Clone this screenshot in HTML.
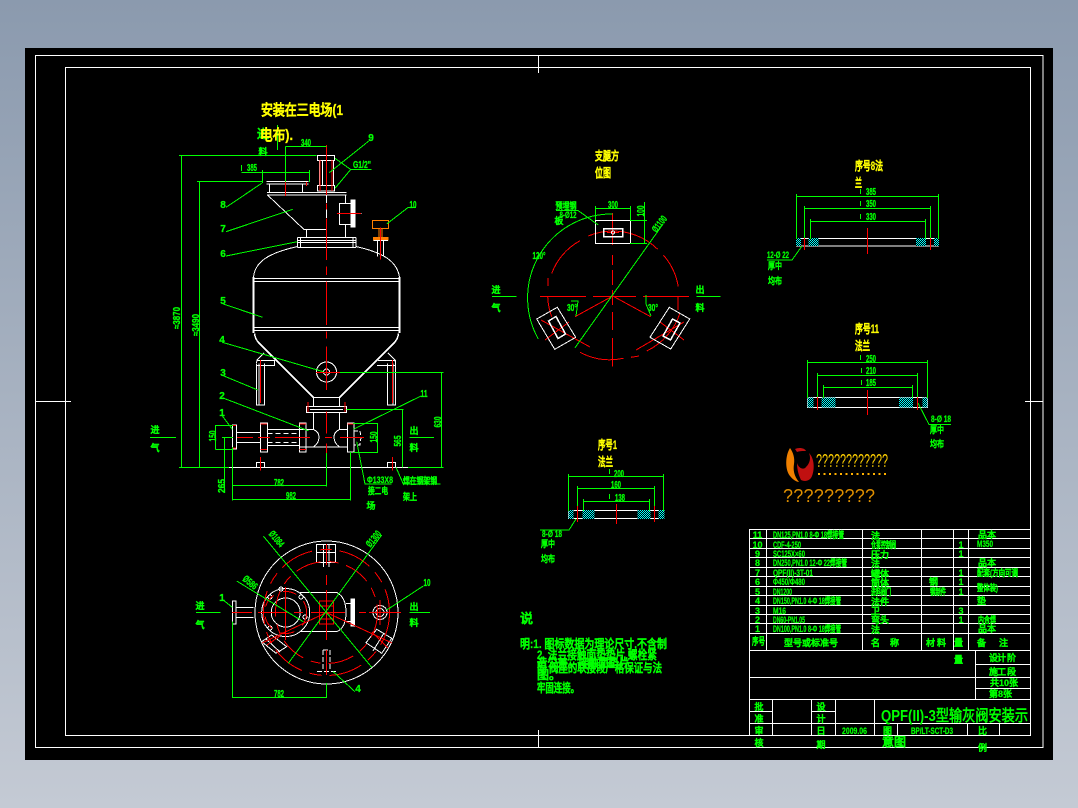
<!DOCTYPE html>
<html><head><meta charset="utf-8"><title>QPF(II)-3</title>
<style>
html,body{margin:0;padding:0;width:1078px;height:808px;overflow:hidden;background:linear-gradient(#8b9aae,#c4cad4)}
svg{position:absolute;left:0;top:0}
text{font-family:"Liberation Sans","WenQuanYi Zen Hei",sans-serif;font-weight:bold}
.g{fill:#0f0;stroke:#0f0;stroke-width:.25;font-size:9px}
.m{fill:#0f0;stroke:#0f0;stroke-width:.25;font-size:9px;text-anchor:middle}
.d{fill:#0f0;stroke:#0f0;stroke-width:.3;font-size:10px;text-anchor:middle}
.y{fill:#ff0;stroke:#ff0;stroke-width:.25;font-size:12px}
.W{fill:none;stroke:#fff;stroke-width:1}
.G{fill:none;stroke:#0f0;stroke-width:1}
.R{fill:none;stroke:#f00;stroke-width:1}
path,circle,rect{shape-rendering:crispEdges}
</style></head><body>
<svg width="1078" height="808" viewBox="0 0 1078 808" xmlns="http://www.w3.org/2000/svg">
<defs>
<pattern id="h" width="2" height="2" patternUnits="userSpaceOnUse"><rect width="2" height="2" fill="#000"/><rect width="1" height="1" fill="#0ff"/><rect x="1" y="1" width="1" height="1" fill="#0ff"/></pattern>
</defs>
<rect x="25" y="48" width="1028" height="712" fill="#000"/>
<!-- frames -->
<g class="W">
<rect x="35.5" y="55.5" width="1007.5" height="692"/>
<rect x="65.5" y="67.5" width="965" height="668"/>
<path d="M538.5 55V73M538.5 730V747M35 401.5H71M1025 401.5H1043"/>
</g>

<!-- SIDE VIEW white -->
<g class="W">
<path d="M317.5 155.5H334.5V160.5H317.5ZM319.5 160.5V185.5M333.5 160.5V185.5M322.5 160.5V185.5M317.5 185.5H334.5V191H317.5Z"/>
<path d="M267 192.5H346.5M267 195H346.5"/>
<path d="M266.5 181.5H308.5M266.5 184H308.5M269.5 184V192M302.5 184V192"/>
<path d="M267.5 195L304 229.5H326"/>
<path d="M306.5 229.5V237.5M345.5 195V203.5M345.5 224.5V237.5"/>
<rect x="339.5" y="203.5" width="12" height="21"/>
<rect x="351" y="200" width="4" height="27" fill="#fff"/>
<path d="M355 213.5H361.5"/>
<path d="M297.5 237.5H356M297.5 240.5H356M297.5 242.5H356M297.5 247.5H356M297.5 237.5V247.5M300.5 237.5V247.5M353 237.5V247.5M356 237.5V247.5"/>
<path d="M253.5 277C255 262 268 253 297.5 246.5M399.5 277C397 262 385 253 356 246.5"/>
<path d="M253.5 277V333M399.5 277V333" style="stroke-width:2"/>
<path d="M254 278.5H399M254 281.5H399M254 327.5H399M254 330.5H399"/>
<path d="M254.5 333.5Q255 338 258 342L313.5 397.5M398.5 333.5Q398 338 395 342L339.5 397.5" style="stroke-width:1.5"/>
<rect x="313.5" y="397.5" width="26" height="9"/>
<rect x="306.5" y="406.5" width="40" height="6"/>
<path d="M310 409.5H343"/>
<path d="M313.5 412.5V429.5M339.5 412.5V429.5"/>
<path d="M299 429.5H313.5Q319 432 319 437Q319 443 313.5 447H299M313.5 447H339.5M347 429.5H339.5Q334 432 334 437Q334 443 339.5 447H347"/>
<circle cx="326.5" cy="372" r="10"/><circle cx="326.5" cy="372" r="3"/>
<path d="M256.5 363.5V405H264.5V363.5M259 363.5V405M387.5 363.5V405H395.5V363.5M393 363.5V405"/>
<path d="M256.5 363L257 360L264 353M395.5 363L395 360L388 353"/>
<path d="M256.5 360.5H274.5V365.5H256.5M378 360.5H395.5V365.5H377"/>
<rect x="232.5" y="425" width="4" height="24"/>
<rect x="260.5" y="423" width="7" height="29"/>
<rect x="299.5" y="423" width="6.5" height="29"/>
<rect x="347.5" y="423" width="6.5" height="29"/>
<path d="M236 432.5H260M236 442.5H260M267.5 429.5H299.5M267.5 445.5H299.5"/>
<path d="M267.5 433.5H299.5M267.5 442.5H299.5" stroke-dasharray="5 3"/>
<path d="M354 431H360L361 437L360 445H354" stroke-dasharray="4 2"/>
<path d="M229 467.5H408.5"/>
<path d="M256.5 467V462.5H264.5V467M387.5 467V462.5H395.5V467"/>
<path d="M326.5 195V203M326.5 209.5V218"/>
</g>
<!-- valve orange -->
<g fill="none" stroke="#ff7f00">
<rect x="372.5" y="220.5" width="16" height="8"/><rect x="379" y="228.5" width="3" height="9"/><rect x="373.5" y="237.5" width="14.5" height="2.5" fill="#ff7f00"/>
</g>
<path class="W" d="M373.5 240.5H388M377.5 241V256.5M383.5 241V256.5"/>
<!-- side view red -->
<g class="R">
<path d="M326.5 145V195M326.5 203.3V209.3M326.5 218.3V260M326.5 266.7V275M326.5 281.7V325M326.5 331.7V338.3M326.5 346.7V390M326.5 411.7V433.3M326.5 443.3V453.3"/>
<path d="M320 160V191M332 160V191M285.5 182V196M306.5 182V186"/>
<path d="M337 213.5H361"/><path d="M380.5 227.5V259.3"/>
<path d="M316 372.5H342"/>
<path d="M260.5 360V403M392.5 360V403"/>
<path d="M237 437.5H253M258 437.5H270M275 437.5H310M325 437.5H332M340 437.5H364"/>
<path d="M260.5 457V470.7M392.5 457V470.7"/>
<path d="M308 402V412M345 402V412"/>
<path d="M233 425.5H236M233 448H236M260.5 424H267M260.5 449.5H267M299.5 424H306M299.5 449.5H306M347.5 424H354"/>
</g>
<!-- side view green -->
<g class="G">
<path d="M181.5 155.5V467.5M199.5 181.5V467.5M179 155.5H316.5M197 181.5H263M179 467.5H229M408 467.5H443.5"/>
<path d="M285.5 146.5H326.5M285.5 146.5V182M241.5 172.5H310M262.5 170V183M309.5 170V182M241.5 165V171"/>
<path d="M277.5 125V150"/>
<path d="M226 207.3L261.7 183.3M226 231.7L292.7 209.3M226 256L297.3 241.7M223.3 304L262.7 317.3M370 140L329.3 172.7M350.7 169.5H371.7M350.7 169.5L335 158.3M350.7 169.5L335 188.3M408.3 207.3L386.7 224M408 207.5H416"/>
<path d="M222.3 342.3L323.3 371.7M223.3 375.7L257.7 390M222.3 397.7L308.3 430.7M221.7 415L232.3 429.3M421 396L353.3 429.3"/>
<path d="M441.5 372.5V467.5M340 372.5H443.5M402.5 409.5V467.5M346.7 409.5H403.5M377.5 423.5V452.5M353 423.5H378M353 452.5H378M215.5 425V449.5M215.5 425.5H233M215.5 449.5H233M224.5 437.5V493M222 437.5H233"/>
<path d="M232.5 447V500.5M326.5 453V486.5M350.5 452V500.5M232.5 485.5H326.5M232.5 499.5H350.5"/>
<path d="M356.7 441.7L365 484H391.7M396 467.3L403.3 484H440.7"/>
<path d="M150 437.5H176M409.5 437.5H434"/>
</g>
<g>
<text class="m" x="263" y="138" style="font-size:12px">进</text>
<text class="y" x="261" y="115" style="font-size:15px" textLength="82" lengthAdjust="spacingAndGlyphs">安装在三电场(1</text>
<text class="y" x="260" y="140" style="font-size:15px" textLength="33" lengthAdjust="spacingAndGlyphs">电布).</text>
<text class="m" x="263" y="155">料</text>
<text class="d" x="223" y="208">8</text><text class="d" x="223" y="232">7</text><text class="d" x="223" y="257">6</text><text class="d" x="223" y="304">5</text>
<text class="d" x="222" y="343">4</text><text class="d" x="223" y="376">3</text><text class="d" x="222" y="399">2</text><text class="d" x="222" y="416">1</text>
<text class="d" x="371" y="141">9</text><text class="d" x="413" y="208" textLength="7" lengthAdjust="spacingAndGlyphs">10</text><text class="d" x="424" y="397" textLength="7" lengthAdjust="spacingAndGlyphs">11</text>
<text class="d" x="306" y="146" textLength="10" lengthAdjust="spacingAndGlyphs">340</text><text class="d" x="252" y="171" textLength="10" lengthAdjust="spacingAndGlyphs">385</text><text class="d" x="362" y="168" textLength="18" lengthAdjust="spacingAndGlyphs">G1/2"</text>
<text class="d" transform="translate(180,318) rotate(-90)" textLength="22" lengthAdjust="spacingAndGlyphs">≈3870</text>
<text class="d" transform="translate(199,325) rotate(-90)" textLength="22" lengthAdjust="spacingAndGlyphs">≈3490</text>
<text class="d" transform="translate(441,422) rotate(-90)" textLength="11" lengthAdjust="spacingAndGlyphs">630</text>
<text class="d" transform="translate(401,441) rotate(-90)" textLength="11" lengthAdjust="spacingAndGlyphs">565</text>
<text class="d" transform="translate(377,437) rotate(-90)" textLength="11" lengthAdjust="spacingAndGlyphs">150</text>
<text class="d" transform="translate(216,436) rotate(-90)" textLength="11" lengthAdjust="spacingAndGlyphs">150</text>
<text class="d" transform="translate(225,486) rotate(-90)" textLength="14" lengthAdjust="spacingAndGlyphs">265</text>
<text class="d" x="279" y="486" textLength="10" lengthAdjust="spacingAndGlyphs">782</text><text class="d" x="291" y="499" textLength="10" lengthAdjust="spacingAndGlyphs">982</text>
<text class="g" x="367" y="483" textLength="26" lengthAdjust="spacingAndGlyphs">Φ133X8</text>
<text class="m" x="378" y="494" textLength="20" lengthAdjust="spacingAndGlyphs">接二电</text><text class="m" x="371" y="509">场</text>
<text class="m" x="420" y="484" textLength="34" lengthAdjust="spacingAndGlyphs">焊在钢架钢</text><text class="m" x="410" y="500" textLength="14" lengthAdjust="spacingAndGlyphs">架上</text>
<text class="m" x="155" y="433">进</text><text class="m" x="155" y="451">气</text>
<text class="m" x="414" y="434">出</text><text class="m" x="414" y="451">料</text>
</g>

<!-- TOP VIEW -->
<g class="W">
<circle cx="326.5" cy="612.5" r="71.5"/>
<path d="M300 592.5H336.7Q346 597 346 612.5Q346 628 336.7 631.7H300"/>
<circle cx="285.7" cy="612.5" r="14.5"/><circle cx="285.7" cy="612.5" r="24"/>
<circle cx="270" cy="597" r="2"/><circle cx="301" cy="597" r="2"/><circle cx="270" cy="628" r="2"/><circle cx="305" cy="617" r="2"/><circle cx="281" cy="589" r="2"/>
<rect x="316.5" y="544.5" width="19" height="18"/><path d="M317 552.5H335M323.5 544V567M329 544V567"/>
<rect x="232.5" y="601" width="3.5" height="23"/><path d="M236 607.5H253.5M236 617.5H253.5"/>
<path d="M346 603.5H351M346 621.5H351"/><rect x="351" y="599" width="3.5" height="27" fill="#fff"/>
<circle cx="380" cy="612.5" r="7"/><circle cx="380" cy="612.5" r="4"/>
<path d="M261.7 641.7L271.7 635L286.7 646.7L276 653.3ZM266 639L280 652"/>
<path d="M366 642.7L376.7 629.3L391.7 638.3L381.7 653.3ZM373 651L384 633"/>
<path d="M323 650V670M330 650V670M323 650H330M317 671.5H337" stroke-dasharray="5 2"/>
</g>
<g class="R">
<circle cx="326.5" cy="612.5" r="63" stroke-dasharray="34 8 12 8"/>
<circle cx="326.5" cy="612.5" r="51" stroke-dasharray="26 8 10 8"/>
<circle cx="285.7" cy="612.5" r="21" stroke-dasharray="14 10"/>
<path d="M232 612.5H252M258 612.5H287M294 612.5H303M311 612.5H345M359 612.5H366M369 612.5H401"/>
<path d="M326.5 544V565M326.5 575V585M326.5 590V640M326.5 650V675"/>
<path d="M285.5 587V640"/>
<rect x="319.5" y="601" width="14" height="23"/>
<path d="M319 606H334M319 619H334"/>
<path d="M326.5 612.5L262 643M326.5 612.5L392 643"/>
<path d="M380 600V625M372 612.5H390"/>
<path d="M267 645L280 636M372 632L388 648"/>
</g>
<g class="G">
<path d="M263.3 536L371.7 667.3M381.7 535L288.3 663.3M236.7 581L303.3 621.7M222.3 599.3L232.3 607.3M423.3 586L386.7 610M355 691.7L333.3 671.7"/>
<path d="M232.5 621.7V698M326.5 683V698M232.5 697.5H326.5M196 612.5H220.7M409.3 612.5H430"/>
</g>
<text class="m" x="200" y="609">进</text><text class="m" x="200" y="628">气</text>
<text class="m" x="414" y="610">出</text><text class="m" x="414" y="626">料</text>
<text class="d" x="222" y="601">1</text><text class="d" x="427" y="586" textLength="7" lengthAdjust="spacingAndGlyphs">10</text><text class="d" x="358" y="692">4</text><text class="d" x="279" y="697" textLength="10" lengthAdjust="spacingAndGlyphs">782</text>
<text class="d" transform="translate(274,541) rotate(50)" textLength="18" lengthAdjust="spacingAndGlyphs">Ø1084</text>
<text class="d" transform="translate(376,541) rotate(-50)" textLength="18" lengthAdjust="spacingAndGlyphs">Ø1300</text>
<text class="d" transform="translate(248,585) rotate(40)" textLength="16" lengthAdjust="spacingAndGlyphs">Ø586</text>

<!-- SUPPORT VIEW -->
<g class="R">
<path d="M588.3 236A64 64 0 0 1 657.7 249.3M663.3 255A64 64 0 0 1 678.3 286.7M551.7 273.3A64 64 0 0 1 580 240.7M548 286V278M580 352.3A64 64 0 0 0 623.3 358.3M631 357.3L639 356M646.7 351A64 64 0 0 0 680 313M547.7 296.7A64 64 0 0 0 551.7 316.7M678 296V310"/>
<path d="M540 296.5H586M593 296.5H636M643 296.5H689"/>
<path d="M612.5 213V245M612.5 255V265M612.5 270V285M612.5 290V305M612.5 312V330M612.5 338V366.7"/>
<path d="M612.7 296L575 316.7M612.7 296L650.7 316.7M545 340L569 322M660 322L684 340M541 320L590 347M636 350L684 322"/>
<path d="M607 232.5H619"/>
</g>
<g class="W">
<rect x="595.5" y="220.5" width="35" height="23"/>
<rect x="603.5" y="228.5" width="19" height="8" style="stroke-width:1.5"/>
<circle cx="613" cy="232.5" r="1.5"/>
<path d="M536.7 319L557.3 307.3L575.7 337.3L554.7 349.3Z"/>
<path d="M548.5 321L556 316.5L565.5 334L558 338.5Z" style="stroke-width:1.5"/>
<path d="M650 337.3L670.7 349L689.7 319L669.3 307.3Z"/>
<path d="M663 336L670.5 340L680 323L672.5 319Z" style="stroke-width:1.5"/>
</g>
<g class="G">
<path d="M612.7 214A84 84 0 0 0 538.3 339"/>
<path d="M575 347.7L660 228.3M556 210.7H578.3L598.3 225"/>
<path d="M595.5 208.5H630.5M595.5 206V220M630.5 206V220M644.5 202V243M630 220.5H647M630 243.5H647"/>
<path d="M571 301H578L576 316M646 295V304L651 316"/>
<path d="M492 296.5H516.7M696.7 296.5H720.7"/>
</g>
<text class="y" x="595" y="160" textLength="24" lengthAdjust="spacingAndGlyphs">支腿方</text><text class="y" x="595" y="177" textLength="16" lengthAdjust="spacingAndGlyphs">位图</text>
<text class="d" x="613" y="208" textLength="10" lengthAdjust="spacingAndGlyphs">300</text>
<text class="d" transform="translate(644,211) rotate(-90)" textLength="11" lengthAdjust="spacingAndGlyphs">100</text>
<text class="m" x="566" y="209" textLength="21" lengthAdjust="spacingAndGlyphs">预埋钢</text><text class="m" x="568" y="218" textLength="17" lengthAdjust="spacingAndGlyphs">8-Ø12</text><text class="m" x="559" y="224">板</text>
<text class="d" transform="translate(662,226) rotate(-52)" textLength="18" lengthAdjust="spacingAndGlyphs">Ø1100</text>
<text class="d" x="539" y="259" textLength="13" lengthAdjust="spacingAndGlyphs">120°</text><text class="d" x="572" y="311" textLength="10" lengthAdjust="spacingAndGlyphs">30°</text><text class="d" x="653" y="311" textLength="10" lengthAdjust="spacingAndGlyphs">30°</text>
<text class="m" x="496" y="293">进</text><text class="m" x="496" y="311">气</text>
<text class="m" x="700" y="293">出</text><text class="m" x="700" y="311">料</text>

<!-- FLANGE 8 -->
<g>
<rect x="796.5" y="238.5" width="142" height="7.5" fill="none" stroke="#fff"/>
<rect x="796" y="238" width="5" height="8" fill="url(#h)"/><rect x="808.5" y="238" width="10" height="8" fill="url(#h)"/><rect x="916" y="238" width="10" height="8" fill="url(#h)"/><rect x="934" y="238" width="5" height="8" fill="url(#h)"/>
<path class="G" d="M796.5 196.5H938.5M796.5 194V239M938.5 194V239M804.5 208.5H930.5M804.5 206V239M930.5 206V239M810.5 221.5H925.5M810.5 219V239M925.5 219V239"/>
<path class="G" d="M860.5 189V194M860.5 201V206M860.5 214V219"/>
<path class="R" d="M804.5 238V250M930.5 238V250M867.5 228V254"/>
</g>
<path class="G" d="M802 246L792 260H767"/>
<text class="y" x="855" y="170" textLength="28" lengthAdjust="spacingAndGlyphs">序号8法</text><text class="y" x="855" y="187" textLength="7" lengthAdjust="spacingAndGlyphs">兰</text>
<text class="d" x="871" y="195" textLength="10" lengthAdjust="spacingAndGlyphs">385</text><text class="d" x="871" y="207" textLength="10" lengthAdjust="spacingAndGlyphs">350</text><text class="d" x="871" y="220" textLength="10" lengthAdjust="spacingAndGlyphs">330</text>
<text class="m" x="778" y="258" textLength="22" lengthAdjust="spacingAndGlyphs">12-Ø 22</text><text class="m" x="775" y="269" textLength="14" lengthAdjust="spacingAndGlyphs">厚中</text><text class="m" x="775" y="284" textLength="14" lengthAdjust="spacingAndGlyphs">均布</text>

<!-- FLANGE 11 -->
<g>
<rect x="807.5" y="397.5" width="120" height="10" fill="none" stroke="#fff"/>
<rect x="807.5" y="397.5" width="6" height="10" fill="url(#h)"/><rect x="821.5" y="397.5" width="14" height="10" fill="url(#h)"/><rect x="899" y="397.5" width="14" height="10" fill="url(#h)"/><rect x="922.5" y="397.5" width="5" height="10" fill="url(#h)"/>
<path class="G" d="M807.5 362.5H927.5M807.5 360V398M927.5 360V398M817.5 375.5H917.5M817.5 373V398M917.5 373V398M823.5 387.5H912.5M823.5 385V398M912.5 385V398"/>
<path class="G" d="M860.5 355V360M861.5 368V373M861.5 380V385"/>
<path class="R" d="M817.5 397V410M917.5 397V410M867.5 390V415"/>
</g>
<path class="G" d="M918 403L929 424.5H951"/>
<text class="y" x="855" y="333" textLength="24" lengthAdjust="spacingAndGlyphs">序号11</text><text class="y" x="855" y="350" textLength="15" lengthAdjust="spacingAndGlyphs">法兰</text>
<text class="d" x="871" y="362" textLength="10" lengthAdjust="spacingAndGlyphs">250</text><text class="d" x="871" y="374" textLength="10" lengthAdjust="spacingAndGlyphs">210</text><text class="d" x="871" y="386" textLength="10" lengthAdjust="spacingAndGlyphs">185</text>
<text class="m" x="941" y="422" textLength="20" lengthAdjust="spacingAndGlyphs">8-Ø 18</text><text class="m" x="937" y="433" textLength="14" lengthAdjust="spacingAndGlyphs">厚中</text><text class="m" x="937" y="447" textLength="14" lengthAdjust="spacingAndGlyphs">均布</text>

<!-- FLANGE 1 -->
<g>
<rect x="568.5" y="510.5" width="95.5" height="8" fill="none" stroke="#fff"/>
<rect x="568.5" y="510" width="5" height="9" fill="url(#h)"/><rect x="582.5" y="510" width="12" height="9" fill="url(#h)"/><rect x="637.5" y="510" width="13" height="9" fill="url(#h)"/><rect x="658.5" y="510" width="6" height="9" fill="url(#h)"/>
<path class="G" d="M568.5 476.5H663.5M568.5 474V511M663.5 474V511M577.5 488.5H654.5M577.5 486V511M654.5 486V511M583.5 501.5H649.5M583.5 499V511M649.5 499V511"/>
<path class="G" d="M609.5 469V474M609.5 494V499"/>
<path class="R" d="M577.5 506V522M654.5 506V522M616.5 504V524"/>
</g>
<path class="G" d="M576 519L569 530H540"/>
<text class="y" x="598" y="449" textLength="19" lengthAdjust="spacingAndGlyphs">序号1</text><text class="y" x="598" y="466" textLength="15" lengthAdjust="spacingAndGlyphs">法兰</text>
<text class="d" x="619" y="477" textLength="10" lengthAdjust="spacingAndGlyphs">200</text><text class="d" x="616" y="488" textLength="10" lengthAdjust="spacingAndGlyphs">160</text><text class="d" x="620" y="501" textLength="10" lengthAdjust="spacingAndGlyphs">138</text>
<text class="m" x="552" y="537" textLength="20" lengthAdjust="spacingAndGlyphs">8-Ø 18</text><text class="m" x="548" y="547" textLength="14" lengthAdjust="spacingAndGlyphs">厚中</text><text class="m" x="548" y="562" textLength="14" lengthAdjust="spacingAndGlyphs">均布</text>

<!-- LOGO -->
<path d="M790 448C785 456 785 470 790 476C793 480 797 482 799 482C794 476 793 470 794 464C795 458 793 452 790 448Z" fill="#f08000" style="shape-rendering:auto"/>
<path d="M795 449C799 447 805 448 806 451C802 451 800 451 797 452ZM809 453C814 458 815 468 812 476C810 481 805 482 801 480C799 476 797 470 797 463C799 469 804 470 806 467C810 463 811 458 809 453Z" fill="#c01010" style="shape-rendering:auto"/>
<text x="816" y="467" font-size="18" fill="#ffd000" style="font-weight:normal" textLength="72" lengthAdjust="spacingAndGlyphs">????????????</text>
<path d="M818 474H886" stroke="#ffb000" stroke-width="2" stroke-dasharray="2 3.5" fill="none"/>
<text x="783" y="502" font-size="18" fill="#e09000" style="font-weight:normal" textLength="92" lengthAdjust="spacing">?????????</text>

<!-- NOTES -->
<g class="g" style="font-size:12px">
<text x="520" y="623" font-size="13">说</text>
<text x="520" y="648" textLength="147" lengthAdjust="spacingAndGlyphs">明:1. 图标数据为理论尺寸,不含制</text>
<text x="537" y="659" textLength="120" lengthAdjust="spacingAndGlyphs">2. 法兰接触面垫垫片,螺栓紧</text>
<text x="537" y="667" textLength="95" lengthAdjust="spacingAndGlyphs">造公差。接触面垫片,</text>
<text x="537" y="672" textLength="125" lengthAdjust="spacingAndGlyphs">固,阀座的联接段严格保证与法</text>
<text x="537" y="679">图。</text>
<text x="537" y="692" textLength="42" lengthAdjust="spacingAndGlyphs">牢固连接。</text>
</g>

<!-- TABLE -->
<g class="W">
<path d="M749.5 529.5H1030.5M749.5 538.5H1030.5M749.5 548.5H1030.5M749.5 557.5H1030.5M749.5 567.5H1030.5M749.5 576.5H1030.5M749.5 586.5H1030.5M749.5 595.5H1030.5M749.5 605.5H1030.5M749.5 614.5H1030.5M749.5 623.5H1030.5M749.5 633.5H1030.5M749.5 650.5H1030.5"/>
<path d="M749.5 529V735M766.5 529V650M862.5 529V650M921.5 529V650M953.5 529V650M968.5 529V650"/>
<path d="M749.5 677.5H1030M749.5 699.5H1030M749.5 723.5H1030M975.5 650V699M975.5 664.5H1030M975.5 688.5H1030"/>
<path d="M772.5 699V735M811.5 699V735M835.5 699V735M874.5 699V735M897.5 723V735M967.5 723V735M999.5 723V735M749.5 711.5H772.5M811.5 711.5H835.5"/>
</g>
<g>
<text class="m" x="757.5" y="538">11</text><text class="m" x="757.5" y="548">10</text><text class="m" x="757.5" y="557">9</text><text class="m" x="757.5" y="566">8</text><text class="m" x="757.5" y="576">7</text><text class="m" x="757.5" y="585">6</text><text class="m" x="757.5" y="595">5</text><text class="m" x="757.5" y="604">4</text><text class="m" x="757.5" y="614">3</text><text class="m" x="757.5" y="623">2</text><text class="m" x="757.5" y="632">1</text>
<text class="g" x="773" y="538" textLength="71" lengthAdjust="spacingAndGlyphs">DN125,PN1.0  8-Φ 18焊接管</text>
<text class="g" x="773" y="548" textLength="28" lengthAdjust="spacingAndGlyphs">CDF-4-250</text>
<text class="g" x="773" y="557" textLength="32" lengthAdjust="spacingAndGlyphs">SC125X×60</text>
<text class="g" x="773" y="566" textLength="74" lengthAdjust="spacingAndGlyphs">DN250,PN1.0  12-Φ 22焊接管</text>
<text class="g" x="773" y="576" textLength="40" lengthAdjust="spacingAndGlyphs">QPF(II)-3T-01</text>
<text class="g" x="773" y="585" textLength="32" lengthAdjust="spacingAndGlyphs">Φ450/Φ480</text>
<text class="g" x="773" y="595" textLength="19" lengthAdjust="spacingAndGlyphs">DN1200</text>
<text class="g" x="773" y="604" textLength="68" lengthAdjust="spacingAndGlyphs">DN150,PN1.0  4-Φ 18焊接管</text>
<text class="g" x="773" y="614" textLength="13" lengthAdjust="spacingAndGlyphs">M16</text>
<text class="g" x="773" y="623" textLength="32" lengthAdjust="spacingAndGlyphs">DN60-PN1.05</text>
<text class="g" x="773" y="632" textLength="68" lengthAdjust="spacingAndGlyphs">DN100,PN1.0  8-Φ 18焊接管</text>
<text class="g" x="871" y="539">法</text>
<text class="g" x="871" y="548" textLength="25" lengthAdjust="spacingAndGlyphs">仓泵控制阀</text>
<text class="g" x="871" y="558">压力</text>
<text class="g" x="871" y="567">法</text>
<text class="g" x="871" y="577">罐体</text>
<text class="g" x="871" y="586">筒体</text>
<text class="g" x="871" y="595" textLength="20" lengthAdjust="spacingAndGlyphs">进料阀门</text>
<text class="g" x="871" y="605">法件</text>
<text class="g" x="871" y="614">卫</text>
<text class="g" x="871" y="623">弯头</text>
<text class="g" x="871" y="633">法</text>
<text class="g" x="929" y="585">钢</text><text class="g" x="930" y="595" textLength="16" lengthAdjust="spacingAndGlyphs">钢制件</text>
<text class="m" x="961" y="548">1</text><text class="m" x="961" y="557">1</text><text class="m" x="961" y="576">1</text><text class="m" x="961" y="585">1</text><text class="m" x="961" y="595">1</text><text class="m" x="961" y="614">3</text><text class="m" x="961" y="623">1</text>
<text class="g" x="978" y="538">品本</text><text class="g" x="977" y="547" textLength="16" lengthAdjust="spacingAndGlyphs">M350</text><text class="g" x="978" y="566">品本</text>
<text class="g" x="977" y="576" textLength="41" lengthAdjust="spacingAndGlyphs">配套(方向可调</text>
<text class="g" x="977" y="591" textLength="21" lengthAdjust="spacingAndGlyphs">整体装)</text>
<text class="g" x="977" y="604">垫</text>
<text class="g" x="978" y="623" textLength="18" lengthAdjust="spacingAndGlyphs">内含焊</text>
<text class="g" x="978" y="632">品本</text>
<text class="g" x="752" y="645" style="font-size:10px" textLength="13" lengthAdjust="spacingAndGlyphs">序号</text>
<text class="g" x="784" y="646" textLength="54" lengthAdjust="spacing">型号或标准号</text>
<text class="g" x="871" y="646" textLength="28" lengthAdjust="spacing">名  称</text>
<text class="g" x="926" y="646" textLength="20" lengthAdjust="spacing">材  料</text>
<text class="g" x="954" y="646">量</text>
<text class="g" x="977" y="646" textLength="31" lengthAdjust="spacing">备  注</text>
<text class="g" x="954" y="663">量</text>
<text class="g" x="989" y="661" textLength="27" lengthAdjust="spacing">设计 阶</text>
<text class="g" x="989" y="675" textLength="27" lengthAdjust="spacing">施工 段</text>
<text class="g" x="990" y="686">共10张</text>
<text class="g" x="989" y="697">第8张</text>
<text class="g" x="881" y="721" style="font-size:16px;stroke-width:0" textLength="147" lengthAdjust="spacingAndGlyphs">QPF(II)-3型输灰阀安装示</text>
<text class="g" x="882" y="746" style="font-size:12px">意图</text>
<text class="m" x="759" y="710">批</text><text class="m" x="759" y="722">准</text><text class="m" x="759" y="734">审</text><text class="m" x="759" y="746">核</text>
<text class="m" x="821" y="710">设</text><text class="m" x="821" y="722">计</text><text class="m" x="821" y="734">日</text><text class="m" x="821" y="748">期</text>
<text class="g" x="842" y="734" textLength="25" lengthAdjust="spacingAndGlyphs">2009.06</text>
<text class="g" x="883" y="734">图</text>
<text class="g" x="911" y="734" textLength="42" lengthAdjust="spacingAndGlyphs">BP/LT-SCT-D3</text>
<text class="g" x="978" y="734">比</text><text class="g" x="978" y="751">例</text>
</g>
</svg>
</body></html>
